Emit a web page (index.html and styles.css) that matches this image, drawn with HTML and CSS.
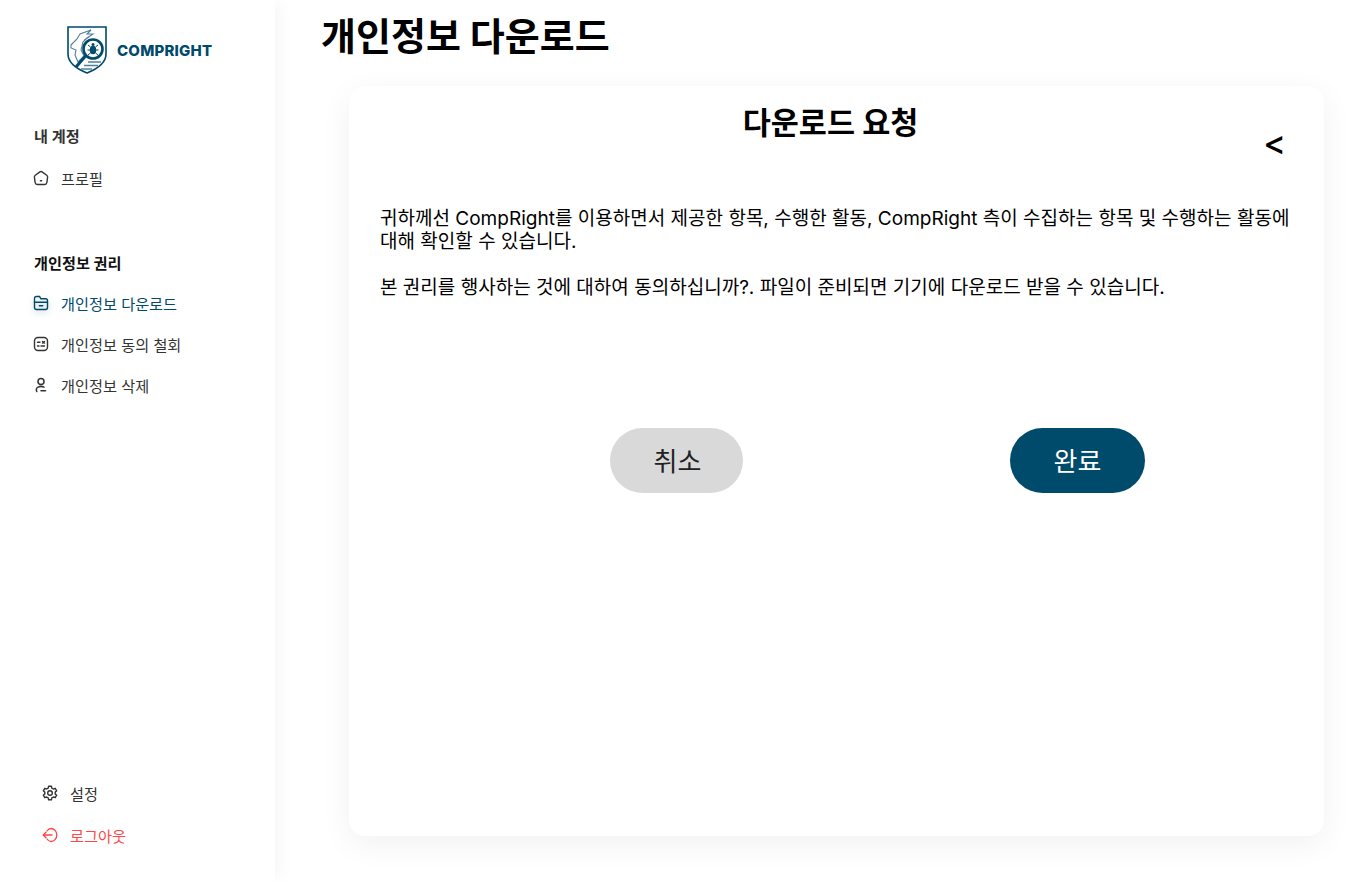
FILE: index.html
```html
<!DOCTYPE html>
<html lang="ko">
<head>
    <meta charset="UTF-8">
    <meta name="viewport" content="width=device-width, initial-scale=1.0">
    <title>개인정보 다운로드</title>
    <link rel="stylesheet" href="styles.css">
</head>
<body>
    <aside class="sidebar">
        <div class="logo">
            <svg class="logo-mark" width="40" height="48" viewBox="0 0 40 48" fill="none" stroke="#004a6b">
                <path d="M1 1H39V28C39 37 30 43 20 47C10 43 1 37 1 28Z" stroke-width="1.6"/>
                <path d="M4 19L10 13L13 8L24 4L20 8L26 8L20 12L16 16L14 24L17 30L11 36L8 29L9 24L4 22Z" stroke-width="1.1" stroke="#4f819b"/>
                <path d="M17 14L22 11M18 18L21 15" stroke-width="0.9" stroke="#4f819b"/>
                <circle cx="26" cy="23" r="9.500" stroke-width="2.600" fill="#fff"/>
                <path d="M18.500 30L9 41" stroke-width="3"/>
                <ellipse cx="26" cy="24" rx="3.200" ry="4.300" fill="#004a6b" stroke="none"/>
                <circle cx="26" cy="18.500" r="1.500" fill="#004a6b" stroke="none"/>
                <path d="M21 19L23.500 21M31 19L28.500 21M20.500 24H23M31.500 24H29M21 29L23.500 27M31 29L28.500 27" stroke-width="1"/>
                <path d="M21 36H34M17 39.500H31M14 43H25" stroke-width="1.300" stroke="#4f819b"/>
            </svg>
            <span class="logo-text">COMPRIGHT</span>
        </div>

        <nav class="nav-group nav-account">
            <div class="nav-title">내 계정</div>
            <a class="nav-item">
                <svg class="icon" viewBox="0 0 16 16" fill="none" stroke="currentColor" stroke-width="1.400" stroke-linejoin="round">
                    <path d="M6.900 1.900C7.600 1.400 8.400 1.400 9.100 1.900L13.700 5.200C14.400 5.700 14.700 6.400 14.600 7.200L13.900 12.500C13.700 13.700 12.900 14.500 11.700 14.500H4.300C3.100 14.500 2.300 13.700 2.100 12.500L1.400 7.200C1.300 6.400 1.600 5.700 2.300 5.200Z"/>
                    <path d="M7.400 10.800H8.600" stroke-linecap="round"/>
                </svg>
                프로필
            </a>
        </nav>

        <nav class="nav-group nav-privacy">
            <div class="nav-title nav-title-strong">개인정보 권리</div>
            <a class="nav-item active">
                <svg class="icon icon-glow" viewBox="0 0 16 16" fill="none" stroke="currentColor" stroke-width="1.400" stroke-linejoin="round">
                    <path d="M1.500 12.500V3.500C1.500 2.400 2.300 1.500 3.400 1.500H6.500L8 3.800H12.600C13.700 3.800 14.500 4.700 14.500 5.800V12.500C14.500 13.700 13.700 14.500 12.600 14.500H3.400C2.300 14.500 1.500 13.700 1.500 12.500Z"/>
                    <path d="M1.500 7.200H14.500M6.300 10.700H9.700" stroke-linecap="round"/>
                </svg>
                개인정보 다운로드
            </a>
            <a class="nav-item">
                <svg class="icon" viewBox="0 0 16 16" fill="none" stroke="currentColor" stroke-width="1.400" stroke-linecap="round">
                    <rect x="1.500" y="1.500" width="13" height="13" rx="3.500"/>
                    <path d="M4.500 6.300H7M9.500 5.500L11.500 7M11.500 5.500L9.500 7M4.500 10H6M8 10H11.500"/>
                </svg>
                개인정보 동의 철회
            </a>
            <a class="nav-item">
                <svg class="icon" viewBox="0 0 16 16" fill="none" stroke="currentColor" stroke-width="1.500" stroke-linecap="round">
                    <circle cx="8" cy="4.600" r="3"/>
                    <path d="M3.800 14.500C2.800 12.900 3.400 10.900 5 10.100C6.700 9.300 9.400 9.300 11 10.100"/>
                    <path d="M8 13.800H12.500"/>
                </svg>
                개인정보 삭제
            </a>
        </nav>

        <nav class="nav-bottom">
            <a class="nav-item">
                <svg class="icon" viewBox="0 0 16 16" fill="none" stroke="currentColor" stroke-width="1.400" stroke-linejoin="round">
                    <path d="M6.600 1.200H9.400L9.800 3.100L11.400 4L13.200 3.300L14.700 5.800L13.200 7.100V8.900L14.700 10.200L13.200 12.700L11.400 12L9.800 12.900L9.400 14.800H6.600L6.200 12.900L4.600 12L2.800 12.700L1.300 10.200L2.800 8.900V7.100L1.300 5.800L2.800 3.300L4.600 4L6.200 3.100Z"/>
                    <circle cx="8" cy="8" r="2.300"/>
                </svg>
                설정
            </a>
            <a class="nav-item logout">
                <svg class="icon" viewBox="0 0 16 16" fill="none" stroke="currentColor" stroke-width="1.300" stroke-linecap="round" stroke-linejoin="round">
                    <path d="M5 4C6 2.500 7.400 1.500 9 1.500C12.200 1.500 14.800 4.400 14.800 8C14.800 11.600 12.200 14.500 9 14.500C7.400 14.500 6 13.500 5 12"/>
                    <path d="M10 8H1.200M4 5.200L1.200 8L4 10.800"/>
                </svg>
                로그아웃
            </a>
        </nav>
    </aside>

    <main class="content">
        <h1 class="page-title">개인정보 다운로드</h1>
        <section class="card">
            <h2 class="card-title">다운로드 요청</h2>
            <div class="back">&lt;</div>
            <div class="card-text">
                <p>귀하께선 CompRight를 이용하면서 제공한 항목, 수행한 활동, CompRight 측이 수집하는 항목 및 수행하는 활동에 대해 확인할 수 있습니다.</p>
                <p>본 권리를 행사하는 것에 대하여 동의하십니까?. 파일이 준비되면 기기에 다운로드 받을 수 있습니다.</p>
            </div>
            <div class="actions">
                <button class="btn btn-cancel">취소</button>
                <button class="btn btn-done">완료</button>
            </div>
        </section>
    </main>
</body>
</html>
```

FILE: styles.css
```css
* {
    box-sizing: border-box;
}

html, body {
    height: 100%;
}

body {
    margin: 0;
    display: flex;
    height: 881px;
    overflow: hidden;
    background-color: #fff;
    color: #000;
    font-family: Inter, "Noto Sans CJK KR", sans-serif;
}

.sidebar {
    width: 275px;
    flex-shrink: 0;
    display: flex;
    flex-direction: column;
    padding: 26px 0 0 33px;
    box-shadow: 4px 0 16px rgba(0, 0, 0, 0.04);
}

.logo {
    display: flex;
    align-items: center;
    gap: 10px;
    margin-left: 34px;
    height: 48px;
}

.logo-text {
    color: #004a6b;
    font-size: 15px;
    font-weight: 800;
    letter-spacing: 0.2px;
    margin-top: 1px;
}

.nav-group {
    display: flex;
    flex-direction: column;
}

.nav-account {
    margin-top: 53px;
}

.nav-privacy {
    margin-top: 56px;
}

.nav-title {
    color: #333;
    font-size: 15.200px;
    font-weight: 600;
    line-height: 20px;
    margin-bottom: 10px;
    padding-left: 1px;
}

.nav-title-strong {
    color: #111;
    font-weight: 700;
    margin-bottom: 8px;
}

.nav-item {
    display: flex;
    align-items: center;
    gap: 12px;
    height: 41px;
    color: #333;
    font-size: 15.200px;
}

.nav-item.active {
    color: #004a6b;
}

.icon {
    width: 16px;
    height: 16px;
    flex-shrink: 0;
}

.icon-glow {
    filter: drop-shadow(0 3px 3px rgba(0, 74, 107, 0.25));
}

.nav-bottom {
    margin-top: auto;
    margin-left: 9px;
    margin-bottom: 26px;
    display: flex;
    flex-direction: column;
    gap: 1px;
}

.nav-item.logout {
    color: #ff4548;
}

.content {
    flex: 1;
    padding: 0 39px 0 46px;
}

.page-title {
    margin: 11px 0 25px;
    font-size: 38px;
    font-weight: 700;
    line-height: 50px;
}

.card {
    position: relative;
    height: 750px;
    margin-left: 28px;
    padding: 17px 32px 16px 31px;
    border-radius: 16px;
    background-color: #fff;
    box-shadow: 0 8px 32px rgba(0, 0, 0, 0.06);
}

.card-title {
    margin: 0;
    padding-right: 11px;
    text-align: center;
    font-size: 30.500px;
    font-weight: 700;
    line-height: 40px;
}

.back {
    position: absolute;
    top: 37px;
    right: 38px;
    font-size: 34px;
    font-weight: 500;
    line-height: 40px;
}

.card-text {
    margin-top: 64px;
    font-size: 19.020px;
    line-height: 23px;
}

.card-text p {
    margin: 0 0 23px;
}

.actions {
    display: flex;
    justify-content: center;
    gap: 267px;
    margin-top: 129px;
    padding-left: 82px;
}

.btn {
    height: 65px;
    padding: 0 0 2px 3px;
    border: none;
    border-radius: 33px;
    font-family: inherit;
    font-size: 26px;
    cursor: pointer;
}

.btn-cancel {
    width: 133px;
    background-color: #d9d9d9;
    color: #222;
}

.btn-done {
    width: 135px;
    padding-left: 1px;
    background-color: #004a6b;
    color: #fff;
}
```
